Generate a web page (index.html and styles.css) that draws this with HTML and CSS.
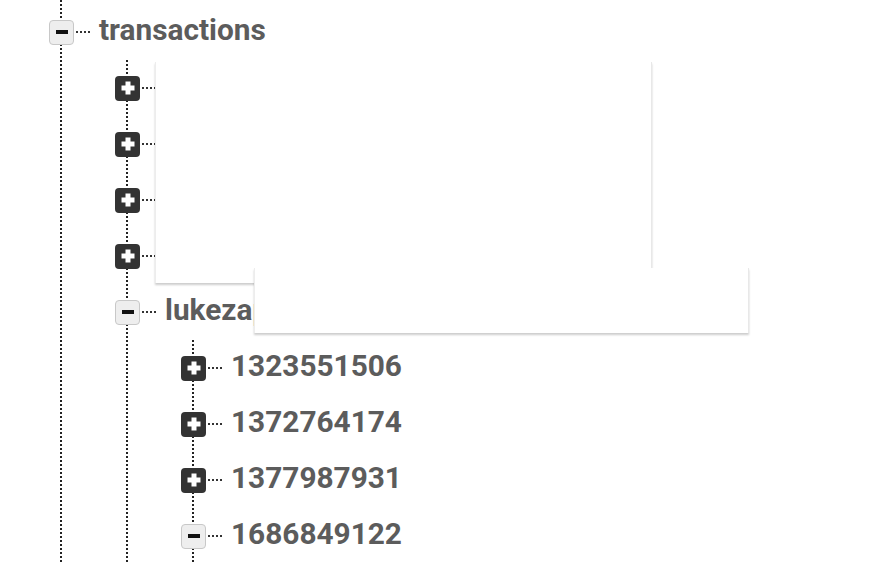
FILE: index.html
```html
<!DOCTYPE html>
<html>
<head>
<meta charset="utf-8">
<link rel="stylesheet" href="styles.css">
</head>
<body>
<div class="tree">
  <div class="node">
    <div class="row"><span class="tg minus"></span><span class="dots"></span><span class="label">transactions</span></div>
    <div class="children">
      <div class="node"><div class="row"><span class="tg plus"></span><span class="dots"></span><span class="label">aaronwebb</span></div></div>
      <div class="node"><div class="row"><span class="tg plus"></span><span class="dots"></span><span class="label">danielkim</span></div></div>
      <div class="node"><div class="row"><span class="tg plus"></span><span class="dots"></span><span class="label">janesmith</span></div></div>
      <div class="node"><div class="row"><span class="tg plus"></span><span class="dots"></span><span class="label">kevinlee</span></div></div>
      <div class="node">
        <div class="row"><span class="tg minus"></span><span class="dots"></span><span class="label">lukezaparaiso</span></div>
        <div class="children">
          <div class="node"><div class="row"><span class="tg plus"></span><span class="dots"></span><span class="label">1323551506</span></div></div>
          <div class="node"><div class="row"><span class="tg plus"></span><span class="dots"></span><span class="label">1372764174</span></div></div>
          <div class="node"><div class="row"><span class="tg plus"></span><span class="dots"></span><span class="label">1377987931</span></div></div>
          <div class="node"><div class="row"><span class="tg minus"></span><span class="dots"></span><span class="label">1686849122</span></div></div>
        </div>
      </div>
    </div>
  </div>
</div>
<div class="popup popup-a"></div>
<div class="popup popup-b"></div>
</body>
</html>
```

FILE: styles.css
```css
html, body {
  margin: 0;
  padding: 0;
  background: #fff;
  height: 564px;
  overflow: hidden;
}
body {
  position: relative;
  font-family: Roboto, "Liberation Sans", sans-serif;
}
.tree {
  min-height: 564px;
  box-sizing: border-box;
  padding: 4px 0 0 49px;
  background-image: repeating-linear-gradient(to bottom, #222 0 2px, transparent 2px 4px);
  background-size: 2px 100%;
  background-position: 60px 0;
  background-repeat: no-repeat;
}
.children {
  margin-left: 66px;
  background-image: repeating-linear-gradient(to bottom, #222 0 2px, transparent 2px 4px);
  background-size: 2px 100%;
  background-position: 11px 0;
  background-repeat: no-repeat;
}
.row {
  height: 56px;
  display: flex;
  align-items: center;
}
.tg {
  width: 25px;
  height: 25px;
  box-sizing: border-box;
  border-radius: 4px;
  position: relative;
  flex: none;
}
.tg.plus {
  background: #333;
}
.tg.minus {
  background: #eeeeee;
  border: 1px solid #c8c8c8;
}
.tg.plus::before,
.tg.plus::after,
.tg.minus::before {
  content: "";
  position: absolute;
  left: 50%;
  top: 50%;
  transform: translate(-50%, -50%);
}
.tg.plus::before {
  width: 13px;
  height: 5px;
  background: #fff;
}
.tg.plus::after {
  width: 5px;
  height: 13px;
  background: #fff;
}
.tg.minus::before {
  width: 12px;
  height: 4px;
  background: #111;
}
.dots {
  width: 14px;
  height: 2px;
  margin-left: 2px;
  flex: none;
  background-image: repeating-linear-gradient(to right, #333 0 2px, transparent 2px 4px);
}
.label {
  margin-left: 9px;
  font-size: 29.8px;
  font-weight: 700;
  line-height: 1;
  color: #5c5c5c;
  white-space: nowrap;
  position: relative;
  top: -2px;
}
.popup {
  position: absolute;
  background: #fff;
  box-sizing: border-box;
  border-left: 1px solid #ededed;
  border-right: 1px solid #e8e8e8;
  box-shadow: 0 2px 2px rgba(0,0,0,0.2);
}
.popup-a {
  left: 155px;
  top: 62px;
  width: 497px;
  height: 221px;
}
.popup-b {
  left: 254px;
  top: 268px;
  width: 495px;
  height: 65px;
}
```
